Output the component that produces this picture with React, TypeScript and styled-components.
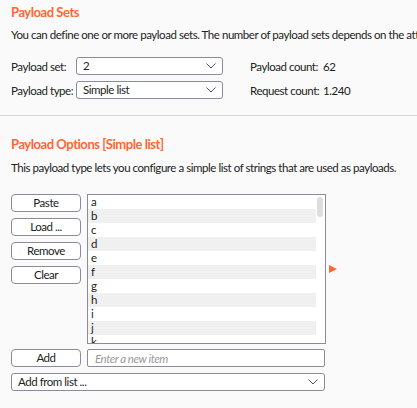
import React from 'react';
import styled, { createGlobalStyle } from 'styled-components';

const colors = {
  bg: '#fafafa',
  orange: '#ff6633',
  text: '#222222',
  border: '#8e8a9e',
  divider: '#d6d6d6',
  stripe: '#f0f0f0',
  thumb: '#dedede',
  placeholder: '#9a9a9a',
};

const GlobalStyle = createGlobalStyle`
  body {
    margin: 0;
    background: ${colors.bg};
    font-family: Lato, 'Noto Sans', sans-serif;
    font-size: 11.5px;
    letter-spacing: -0.45px;
    color: ${colors.text};
    overflow: hidden;
  }
`;

const Page = styled.div`
  width: 417px;
  height: 408px;
  overflow: hidden;
`;

const Section = styled.section<{ top: number }>`
  padding: ${({ top }) => top}px 0 0 11px;
`;

const Title = styled.h2`
  margin: 0;
  font-size: 13px;
  font-weight: 700;
  letter-spacing: -0.45px;
  line-height: 16px;
  color: ${colors.orange};
  white-space: nowrap;
`;

const Desc = styled.p<{ gap: number }>`
  margin: ${({ gap }) => gap}px 0 0;
  line-height: 16px;
  white-space: nowrap;
`;

const FormGrid = styled.div`
  margin-top: 14px;
  display: grid;
  grid-template-columns: 65px 147px 1fr;
  grid-auto-rows: 18px;
  row-gap: 6px;
  align-items: center;
`;

const FormLabel = styled.span`
  white-space: nowrap;
`;

const Stat = styled.span`
  margin-left: 27px;
  display: flex;
  white-space: nowrap;
`;

const StatLabel = styled.span`
  flex: 0 0 73px;
`;

const SelectBox = styled.div<{ width?: number }>`
  box-sizing: border-box;
  height: 18px;
  width: ${({ width }) => (width ? `${width}px` : '100%')};
  background: #fff;
  border: 1px solid ${colors.border};
  border-radius: 3px;
  display: flex;
  align-items: center;
  justify-content: space-between;
  padding: 0 6px 0 6px;
  line-height: 16px;
`;

const Divider = styled.hr`
  margin: 16px 0 0;
  border: none;
  border-top: 1px solid ${colors.divider};
`;

const Editor = styled.div`
  margin-top: 18px;
  display: grid;
  grid-template-columns: 70px 239px 12px;
  column-gap: 6px;
`;

const ButtonColumn = styled.div`
  display: flex;
  flex-direction: column;
  gap: 6px;
`;

const Button = styled.button`
  box-sizing: border-box;
  width: 70px;
  height: 18px;
  padding: 0;
  background: #fff;
  border: 1px solid ${colors.border};
  border-radius: 4px;
  font: inherit;
  letter-spacing: inherit;
  color: ${colors.text};
  line-height: 16px;
`;

const ListBox = styled.div`
  box-sizing: border-box;
  position: relative;
  height: 150px;
  background: #fff;
  border: 1px solid ${colors.border};
  overflow: hidden;
`;

const ListRow = styled.div<{ striped: boolean }>`
  height: 14px;
  width: 228px;
  line-height: 14px;
  padding-left: 3px;
  box-sizing: border-box;
  background: ${({ striped }) => (striped ? colors.stripe : '#fff')};
`;

const Thumb = styled.div`
  position: absolute;
  top: 2px;
  right: 2px;
  width: 6px;
  height: 20px;
  border-radius: 3px;
  background: ${colors.thumb};
`;

const Arrow = styled.div`
  align-self: center;
  margin-left: -3px;
  width: 0;
  height: 0;
  border-top: 4px solid transparent;
  border-bottom: 4px solid transparent;
  border-left: 8px solid ${colors.orange};
`;

const AddRow = styled.div`
  margin-top: 5px;
  display: flex;
  gap: 6px;
`;

const Input = styled.input`
  box-sizing: border-box;
  width: 238px;
  height: 18px;
  background: #fff;
  border: 1px solid ${colors.border};
  border-radius: 2px;
  padding: 0 7px;
  font: inherit;
  letter-spacing: inherit;
  color: ${colors.text};
  outline: none;
  &::placeholder {
    color: ${colors.placeholder};
    font-style: italic;
  }
`;

const AddFromList = styled.div`
  margin-top: 6px;
  width: 314px;
`;

const Chevron = () => (
  <svg width="10" height="6" viewBox="0 0 10 6">
    <polyline points="0.5,0.5 5,5 9.5,0.5" fill="none" stroke="#555" strokeWidth="1" />
  </svg>
);

const Select: React.FC<{ value: string; width?: number }> = ({ value, width }) => (
  <SelectBox width={width}>
    <span>{value}</span>
    <Chevron />
  </SelectBox>
);

const items = ['a', 'b', 'c', 'd', 'e', 'f', 'g', 'h', 'i', 'j', 'k'];

export default function App() {
  return (
    <Page>
      <GlobalStyle />
      <Section top={4}>
        <Title>Payload Sets</Title>
        <Desc gap={7}>
          You can define one or more payload sets. The number of payload sets depends on the attack type defined in the Positions tab.
        </Desc>
        <FormGrid>
          <FormLabel>Payload set:</FormLabel>
          <Select value="2" width={147} />
          <Stat>
            <StatLabel>Payload count:</StatLabel>
            <span>62</span>
          </Stat>
          <FormLabel>Payload type:</FormLabel>
          <Select value="Simple list" width={147} />
          <Stat>
            <StatLabel>Request count:</StatLabel>
            <span>1.240</span>
          </Stat>
        </FormGrid>
      </Section>
      <Divider />
      <Section top={20}>
        <Title>Payload Options [Simple list]</Title>
        <Desc gap={8}>
          This payload type lets you configure a simple list of strings that are used as payloads.
        </Desc>
        <Editor>
          <ButtonColumn>
            <Button>Paste</Button>
            <Button>Load ...</Button>
            <Button>Remove</Button>
            <Button>Clear</Button>
          </ButtonColumn>
          <ListBox>
            {items.map((it, i) => (
              <ListRow key={it} striped={i % 2 === 1}>
                {it}
              </ListRow>
            ))}
            <Thumb />
          </ListBox>
          <Arrow />
        </Editor>
        <AddRow>
          <Button>Add</Button>
          <Input placeholder="Enter a new item" />
        </AddRow>
        <AddFromList>
          <Select value="Add from list ..." />
        </AddFromList>
      </Section>
    </Page>
  );
}
